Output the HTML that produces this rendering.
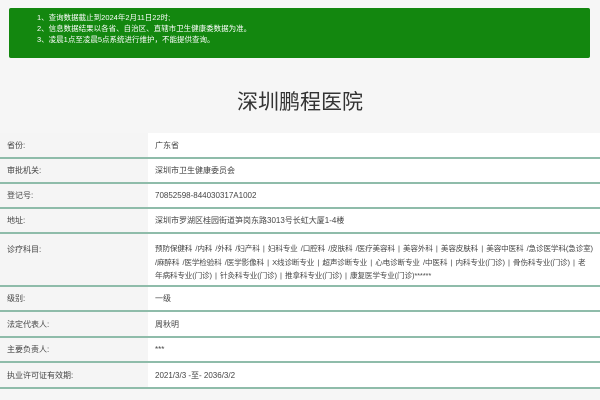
<!DOCTYPE html>
<html><head><meta charset="utf-8"><style>
*{margin:0;padding:0;box-sizing:border-box}
body{width:600px;height:400px;overflow:hidden;background:#f6f6f6;font-family:"Liberation Sans","Noto Sans CJK SC",sans-serif;color:#333;position:relative}
.note{position:absolute;left:9px;top:8px;width:581px;height:50px;background:#13870f;border-radius:2px;color:#fff;font-size:7.5px;line-height:11px;padding:4px 0 0 28px}
h1{position:absolute;left:0;width:600px;top:86px;text-align:center;font-size:21px;font-weight:normal;color:#333}
.row{position:absolute;left:0;width:600px;border-bottom:2px solid #8fbcaa;font-size:8px;color:#444}
.row .l{position:absolute;left:0;top:0;bottom:0;width:148px;background:#f5f5f5;padding-left:7px}
.row .v{position:absolute;left:148px;right:0;top:0;bottom:0;background:#fff;padding-left:7px;padding-right:4px;overflow:hidden}
.c{display:flex;align-items:center}
.dx div{white-space:nowrap;word-spacing:1.2px;font-size:7.6px;letter-spacing:-0.15px}
</style></head><body>
<div class="note">1、查询数据截止到2024年2月11日22时;<br>2、信息数据结果以各省、自治区、直辖市卫生健康委数据为准。<br>3、凌晨1点至凌晨5点系统进行维护，不能提供查询。</div>
<h1>深圳鹏程医院</h1>
<div class="row" style="top:133px;height:26px"><div class="l c">省份:</div><div class="v c">广东省</div></div>
<div class="row" style="top:159px;height:25px"><div class="l c">审批机关:</div><div class="v c">深圳市卫生健康委员会</div></div>
<div class="row" style="top:184px;height:25px"><div class="l c">登记号:</div><div class="v c">70852598-844030317A1002</div></div>
<div class="row" style="top:209px;height:25px"><div class="l c">地址:</div><div class="v c">深圳市罗湖区桂园街道笋岗东路3013号长虹大厦1-4楼</div></div>
<div class="row" style="top:234px;height:53px"><div class="l" style="padding-top:10px">诊疗科目:</div><div class="v dx" style="padding-top:8px;line-height:13.5px">
<div>预防保健科 /内科 /外科 /妇产科 | 妇科专业 /口腔科 /皮肤科 /医疗美容科 | 美容外科 | 美容皮肤科 | 美容中医科 /急诊医学科(急诊室)</div>
<div>/麻醉科 /医学检验科 /医学影像科 | X线诊断专业 | 超声诊断专业 | 心电诊断专业 /中医科 | 内科专业(门诊) | 骨伤科专业(门诊) | 老</div>
<div>年病科专业(门诊) | 针灸科专业(门诊) | 推拿科专业(门诊) | 康复医学专业(门诊)******</div>
</div></div>
<div class="row" style="top:287px;height:25px"><div class="l c">级别:</div><div class="v c">一级</div></div>
<div class="row" style="top:312px;height:26px"><div class="l c">法定代表人:</div><div class="v c">周秋明</div></div>
<div class="row" style="top:338px;height:25px"><div class="l c">主要负责人:</div><div class="v c">***</div></div>
<div class="row" style="top:363px;height:26px"><div class="l c">执业许可证有效期:</div><div class="v c">2021/3/3 -至- 2036/3/2</div></div>
</body></html>
